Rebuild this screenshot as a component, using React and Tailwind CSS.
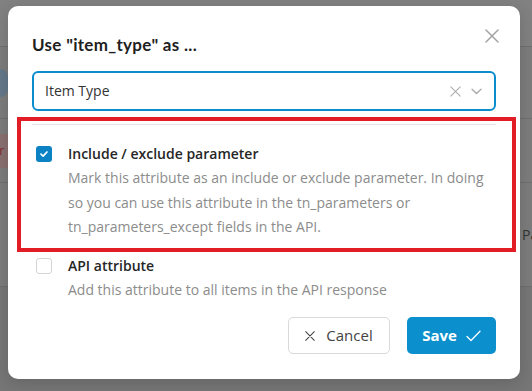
import React from 'react'

const body = { fontFamily: '"Open Sans", "Noto Sans", sans-serif' }
const heading = { fontFamily: 'Lato, "Open Sans", sans-serif' }

function CloseIcon({ size = 14, color = '#a3a3a3', width = 1.5 }) {
  return (
    <svg width={size} height={size} viewBox="0 0 14 14" fill="none">
      <path d="M1 1L13 13M13 1L1 13" stroke={color} strokeWidth={width} strokeLinecap="round" />
    </svg>
  )
}

function Option({ checked, title, children }) {
  return (
    <div className="flex items-start gap-4">
      <div
        className={`mt-1 w-4 h-4 shrink-0 rounded-[3px] flex items-center justify-center ${
          checked ? 'bg-[#0a82c4]' : 'bg-white border border-[#d4d4d4]'
        }`}
      >
        {checked && (
          <svg width="10" height="10" viewBox="0 0 10 10" fill="none">
            <path d="M2 5.2L4.1 7.2L8 3" stroke="#fff" strokeWidth="1.7" strokeLinecap="round" strokeLinejoin="round" />
          </svg>
        )}
      </div>
      <div>
        <div className="text-[14px] leading-6 font-semibold text-[#262626]">{title}</div>
        <p className="text-[14px] leading-[24.5px] text-[#8c8c8c]">{children}</p>
      </div>
    </div>
  )
}

export default function App() {
  return (
    <div className="relative w-[532px] h-[391px] overflow-hidden bg-[#7c7c7c]" style={body}>
      {/* page behind the backdrop */}
      <div className="flex flex-col">
        <div className="h-[47px] bg-[#818181] border-b border-[#6f6f6f]" />
        <div className="h-[72px] border-b border-[#6f6f6f] flex items-center">
          <div className="w-[8px] h-[28px] rounded-r-full bg-[#64788a]" />
        </div>
        <div className="h-[64px] border-b border-[#6f6f6f] flex items-center">
          <div className="w-[8px] h-[34px] bg-[#8a7070] text-[12px] text-[#7a2a2a] overflow-hidden leading-[34px]">
            <span className="-ml-2">or</span>
          </div>
        </div>
        <div className="h-[104px] border-b border-[#6f6f6f] flex items-center justify-end">
          <span className="text-[14px] text-[#333] w-[10px] overflow-hidden">Pa</span>
        </div>
        <div className="h-[104px] bg-[#767676]" />
      </div>

      {/* modal */}
      <div className="absolute left-[8px] top-[6px] w-[512px] h-[373px] bg-white rounded-[10px] shadow-[0_4px_16px_rgba(0,0,0,0.15)] px-6 pt-[27px] flex flex-col">
        <div className="flex items-start justify-between">
          <h2 className="text-[17px] leading-6 font-bold tracking-[0.3px] text-[#1f1f1f]" style={heading}>
            Use &quot;item_type&quot; as ...
          </h2>
          <button className="mt-[-4px] mr-[-3px]">
            <CloseIcon />
          </button>
        </div>

        <div className="mt-[14px] h-[40px] border-2 border-[#0b8ccc] rounded-[6px] flex items-center pl-[11px] pr-[12px]">
          <span className="flex-1 text-[14px] text-[#333] -mt-[2px]">Item Type</span>
          <CloseIcon size={11} color="#aaaaaa" width={1.3} />
          <svg className="ml-[10px]" width="11" height="7" viewBox="0 0 11 7" fill="none">
            <path d="M1 1.2L5.5 5.5L10 1.2" stroke="#aaaaaa" strokeWidth="1.3" strokeLinecap="round" />
          </svg>
        </div>

        <div className="mt-[13px] border-t border-[#e6e6e6] pt-[17px] pl-1 flex flex-col gap-[14px]">
          <Option checked title="Include / exclude parameter">
            Mark this attribute as an include or exclude parameter. In doing so you can use this attribute in the
            tn_parameters or tn_parameters_except fields in the API.
          </Option>
          <Option title="API attribute">Add this attribute to all items in the API response</Option>
        </div>

        <div className="mt-auto mb-[25px] flex justify-end gap-[17px]">
          <button className="w-[102px] h-[37px] rounded-[5px] border border-[#d9d9d9] bg-white flex items-center justify-center gap-[11px] text-[15px] text-[#444]">
            <CloseIcon size={10} color="#444" width={1.5} />
            Cancel
          </button>
          <button className="w-[89px] h-[37px] rounded-[5px] bg-[#0b8fcd] flex items-center justify-center gap-[9px] text-[15px] font-bold text-white">
            Save
            <svg width="15" height="12" viewBox="0 0 15 12" fill="none">
              <path d="M1 6.5L5 10.5L14 1.2" stroke="#fff" strokeWidth="1.3" strokeLinecap="round" strokeLinejoin="round" />
            </svg>
          </button>
        </div>
      </div>

      {/* red highlight annotation */}
      <div className="absolute left-[17px] top-[117px] w-[499px] h-[135px] border-[4px] border-[#e21d25] pointer-events-none" />
    </div>
  )
}
